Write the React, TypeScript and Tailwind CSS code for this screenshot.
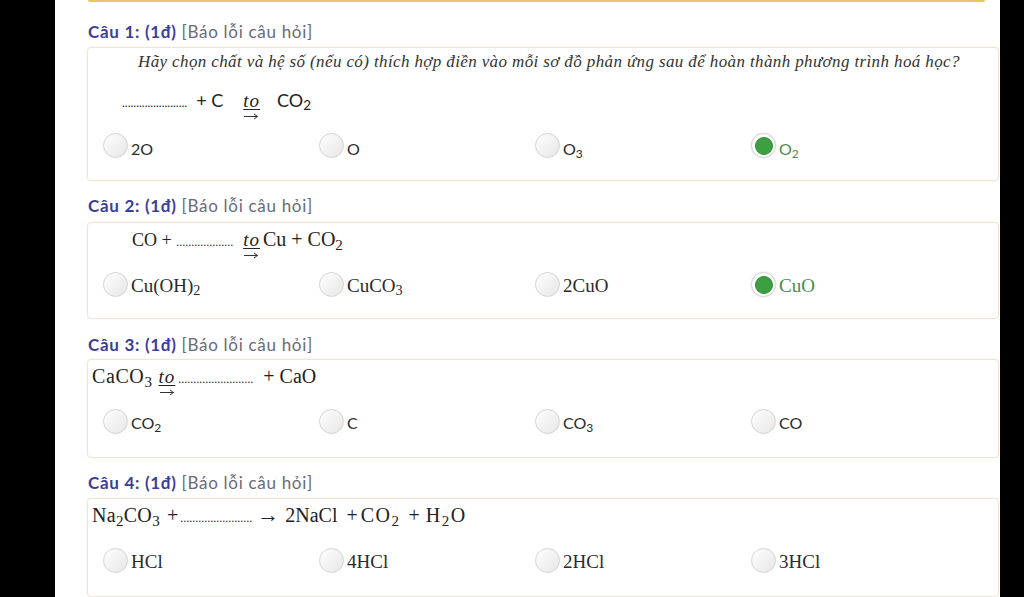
import React from 'react'

type Opt = { label: React.ReactNode; checked?: boolean }

const sans = "font-['Lato','Liberation_Sans',sans-serif]"
const serif = "font-['Liberation_Serif','DejaVu_Serif',serif]"

const Heat = ({ className = '' }: { className?: string }) => (
  <span className={`${serif} inline-flex flex-col items-start leading-none ${className}`}>
    <span className="italic underline underline-offset-[2px] text-[19px] tracking-[1px] leading-[18px]">to</span>
    <svg width="15" height="7" viewBox="0 0 15 7" className="ml-[1px] mt-[3px]" fill="none" stroke="#333" strokeWidth="1">
      <path d="M0 3.5H13.5M10 1L13.5 3.5L10 6" />
    </svg>
  </span>
)

const Dots = ({ n, className = '' }: { n: number; className?: string }) => (
  <span className={`text-[12px] ${className}`}>{'.'.repeat(n)}</span>
)

const Radio = ({ checked }: { checked?: boolean }) =>
  checked ? (
    <span className="flex h-[25px] w-[25px] shrink-0 items-center justify-center rounded-full border border-[#cfdccf] bg-white shadow-[0_0_2px_rgba(0,0,0,0.15)]">
      <span className="h-[18px] w-[18px] rounded-full border border-[#2f8a35] bg-[#3c9f40]" />
    </span>
  ) : (
    <span className="h-[25px] w-[25px] shrink-0 rounded-full border border-[#d4d4d4] bg-gradient-to-br from-white to-[#e6e6e6]" />
  )

const Options = ({ opts, font, shift }: { opts: Opt[]; font: string; shift: string }) => (
  <div className="grid grid-cols-[216px_216px_216px_216px] pl-[15px] mt-[22px]">
    {opts.map((o, i) => (
      <div key={i} className="flex h-[25px] items-center gap-[3px]">
        <Radio checked={o.checked} />
        <span className={`${font} ${shift} leading-[22px] whitespace-nowrap ${o.checked ? 'text-[#4b8b4b]' : 'text-[#2b2b2b]'}`}>
          {o.label}
        </span>
      </div>
    ))}
  </div>
)

const Heading = ({ n, className }: { n: number; className: string }) => (
  <div className={`${sans} text-[17px] tracking-[0.7px] leading-[20px] h-[20px] pl-[1px] ${className}`}>
    <span className="font-bold text-[#3a3d9c]">Câu {n}: (1đ)</span>{' '}
    <span className="text-[#6a6a78]">[Báo lỗi câu hỏi]</span>
  </div>
)

const Card = ({ className, children }: { className: string; children: React.ReactNode }) => (
  <div className={`w-[912px] rounded-[4px] border border-[#efe6d2] bg-white shadow-[0_0_2px_rgba(230,215,180,0.35)] ${className}`}>
    {children}
  </div>
)

export default function App() {
  return (
    <div className="flex h-[597px] w-[1024px] overflow-hidden bg-black">
      <div className="w-[55px] shrink-0" />
      <main className="w-[945px] shrink-0 bg-white pl-[32px]">
        <div className="ml-[1px] h-[2px] w-[897px] rounded-b bg-[#e6c766]" />

        <Heading n={1} className="mt-[20px]" />
        <Card className="mt-[5px] h-[134px] pt-[3px]">
          <p className={`${serif} italic text-[17px] leading-[22px] h-[22px] text-[#333] pl-[50px] tracking-[0.38px] whitespace-nowrap`}>
            Hãy chọn chất và hệ số (nếu có) thích hợp điền vào mỗi sơ đồ phản ứng sau để hoàn thành phương trình hoá học?
          </p>
          <div className={`${sans} mt-[16px] h-[22px] pl-[34px] text-[18px] leading-[22px] text-[#222] whitespace-nowrap`}>
            <Dots n={23} />
            <span className="ml-[9px]">+ C</span>
            <Heat className="ml-[20px] mr-[17px]" />
            CO<sub>2</sub>
          </div>
          <Options
            font={`${sans} text-[16px]`}
            shift="translate-y-[3px]"
            opts={[
              { label: '2O' },
              { label: 'O' },
              { label: <>O<sub>3</sub></> },
              { label: <>O<sub>2</sub></>, checked: true },
            ]}
          />
        </Card>

        <Heading n={2} className="mt-[15px]" />
        <Card className="mt-[6px] h-[97px] pt-[5px]">
          <div className={`${serif} h-[22px] pl-[44px] text-[18px] leading-[22px] text-[#222] whitespace-nowrap`}>
            CO + <Dots n={19} />
            <Heat className="ml-[10px] mr-[3px]" />
            <span className="text-[20px]">
              Cu + CO<sub>2</sub>
            </span>
          </div>
          <Options
            font={`${serif} text-[19px]`}
            shift="translate-y-[1px]"
            opts={[
              { label: <>Cu(OH)<sub>2</sub></> },
              { label: <>CuCO<sub>3</sub></> },
              { label: '2CuO' },
              { label: 'CuO', checked: true },
            ]}
          />
        </Card>

        <Heading n={3} className="mt-[16px]" />
        <Card className="mt-[4px] h-[99px] pt-[5px]">
          <div className={`${serif} h-[22px] pl-[4px] text-[20px] leading-[22px] text-[#222] whitespace-nowrap`}>
            <span className="tracking-[0.6px]">
              CaCO<sub>3</sub>
            </span>
            <Heat className="ml-[6px] mr-[3px]" />
            <Dots n={25} />
            <span className="ml-[10px]">+ CaO</span>
          </div>
          <Options
            font={`${sans} text-[16px]`}
            shift="translate-y-[1px]"
            opts={[
              { label: <>CO<sub>2</sub></> },
              { label: 'C' },
              { label: <>CO<sub>3</sub></> },
              { label: 'CO' },
            ]}
          />
        </Card>

        <Heading n={4} className="mt-[15px]" />
        <Card className="mt-[5px] h-[99px] pt-[5px]">
          <div className={`${serif} flex h-[22px] items-baseline pl-[4px] text-[20px] leading-[22px] text-[#222] whitespace-nowrap`}>
            <span className="tracking-[0.3px]">
              Na<sub>2</sub>CO<sub>3</sub>
            </span>
            <span className="ml-[7px]">+</span>
            <Dots n={24} className="ml-[2px]" />
            <span className="ml-[5px] text-[22px]">→</span>
            <span className="ml-[6px]">2NaCl</span>
            <span className="ml-[9px]">+</span>
            <span className="ml-[3px] tracking-[1.5px]">
              CO<sub>2</sub>
            </span>
            <span className="ml-[8px]">+</span>
            <span className="ml-[6px] tracking-[1.5px]">
              H<sub>2</sub>O
            </span>
          </div>
          <Options
            font={`${serif} text-[19px]`}
            shift="translate-y-[1px]"
            opts={[{ label: 'HCl' }, { label: '4HCl' }, { label: '2HCl' }, { label: '3HCl' }]}
          />
        </Card>
      </main>
    </div>
  )
}
